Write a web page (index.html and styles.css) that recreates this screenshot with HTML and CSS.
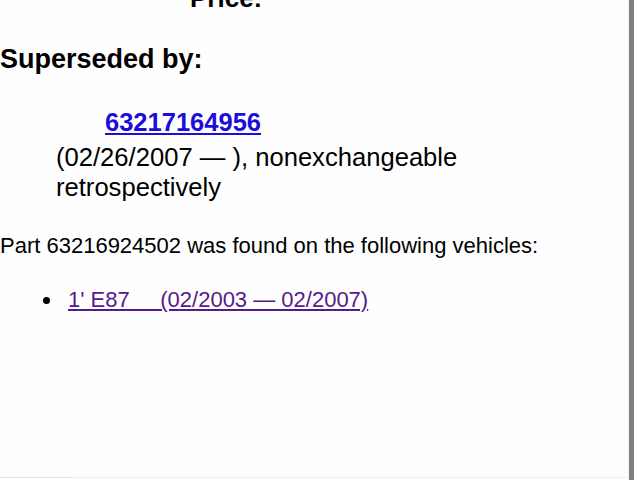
FILE: index.html
```html
<!DOCTYPE html>
<html>
<head>
<meta charset="utf-8">
<link rel="stylesheet" href="styles.css">
</head>
<body>
<div class="page">
  <div class="content">
    <div class="price">Price:</div>
    <h2 class="heading">Superseded by:</h2>
    <div class="replacement"><a class="part-link" href="#">63217164956</a></div>
    <div class="note">(02/26/2007 — ), nonexchangeable<br>retrospectively</div>
    <p class="found">Part 63216924502 was found on the following vehicles:</p>
    <ul class="vehicles">
      <li class="vehicle"><a class="vehicle-link" href="#">1' E87&nbsp;&nbsp;&nbsp;&nbsp;&nbsp;(02/2003 — 02/2007)</a></li>
    </ul>
    <div class="spacer"></div>
    <div class="bottom-line"><span class="bottom-seg"></span></div>
  </div>
  <div class="scrollbar"></div>
  <div class="gutter"></div>
</div>
</body>
</html>
```

FILE: styles.css
```css
html, body {
  margin: 0;
  padding: 0;
  background: #ffffff;
  overflow: hidden;
}
body {
  font-family: "Liberation Sans", Arial, sans-serif;
  color: #000;
}
.page {
  display: flex;
  width: 640px;
  height: 480px;
}
.content {
  flex: 1;
  display: flex;
  flex-direction: column;
  background: #fefefe;
  border-right: 1px solid #f4f4f4;
}
.price {
  margin-top: -17px;
  padding-left: 190px;
  font-size: 26px;
  font-weight: bold;
  line-height: 30px;
}
.heading {
  margin: 30px 0 0 0;
  font-size: 27px;
  font-weight: bold;
  line-height: 32px;
}
.replacement {
  margin-top: 31px;
  padding-left: 105px;
  font-size: 25.5px;
  font-weight: bold;
  line-height: 32px;
}
.part-link {
  color: #1a0dde;
  text-decoration: underline;
}
.note {
  margin-top: 5px;
  padding-left: 56px;
  font-size: 25.6px;
  line-height: 29.5px;
}
.found {
  margin: 31px 0 0 0;
  font-size: 22px;
  line-height: 26px;
}
.vehicles {
  margin: 28px 0 0 0;
  padding-left: 43px;
  list-style: none;
  font-size: 22px;
  line-height: 26px;
}
.vehicle {
  display: flex;
  align-items: center;
}
.vehicle::before {
  content: "";
  width: 7px;
  height: 7px;
  border-radius: 50%;
  background: #000;
  margin-right: 18px;
}
.vehicle-link {
  color: #551a8b;
  text-decoration: underline;
}
.spacer {
  flex: 1;
}
.bottom-line {
  height: 1px;
  margin-bottom: 2px;
  background: #efefef;
  display: flex;
}
.bottom-seg {
  width: 72px;
  background: #e2e2e2;
}
.scrollbar {
  width: 5px;
  background: #808080;
}
.gutter {
  width: 6px;
  background: #ffffff;
}
```
